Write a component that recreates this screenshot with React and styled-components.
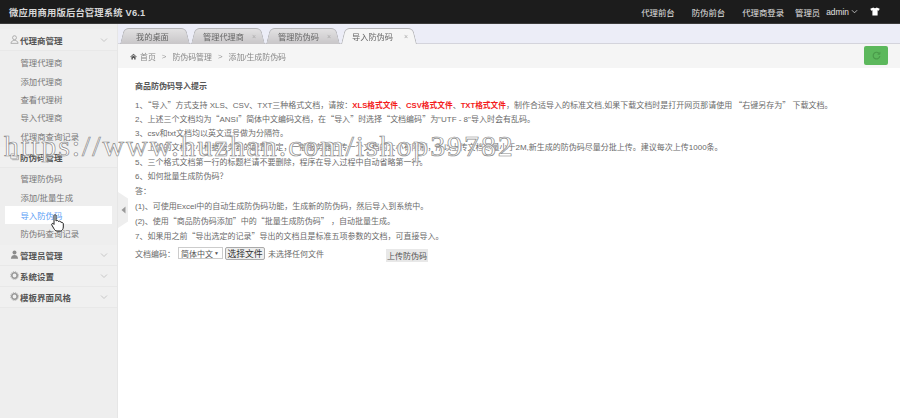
import React from "react";
import styled, { createGlobalStyle } from "styled-components";

const Global = createGlobalStyle`
  html, body { margin: 0; padding: 0; background: #fff; }
  body { font-family: "Liberation Sans", "Noto Sans CJK SC", sans-serif; font-size: 8px; color: #666; }
  * { box-sizing: border-box; }
`;

const Page = styled.div`
  position: relative;
  width: 900px;
  height: 418px;
  overflow: hidden;
  display: flex;
  flex-direction: column;
  filter: blur(0.5px);
`;

const Header = styled.header`
  height: 24px;
  flex: none;
  background: #1c1c1c;
  border-bottom: 1px solid #3a3a3a;
  color: #ddd;
  display: flex;
  align-items: center;
  padding: 0 20px 0 9px;
`;
const Brand = styled.div`
  font-size: 9.3px;
  font-weight: 600;
  color: #d8d8d8;
  letter-spacing: 0.02em;
`;
const HeaderNav = styled.nav`
  margin-left: auto;
  display: flex;
  align-items: center;
  font-size: 8.4px;
  color: #e2e2e2;
`;
const NavLink = styled.span`
  margin-left: ${(p) => p.$gap}px;
  display: inline-flex;
  align-items: center;
  gap: 2px;
`;

const Body = styled.div`
  flex: 1;
  display: flex;
  min-height: 0;
`;

const Sidebar = styled.aside`
  width: 118px;
  flex: none;
  background: #eeeeee;
  border-right: 1px solid #e6e6e6;
  padding-top: 5px;
`;
const GroupHead = styled.div`
  height: ${(p) => p.$h || 21}px;
  display: flex;
  align-items: center;
  padding: 0 9px 0 10px;
  gap: 1px;
  font-size: 8.5px;
  font-weight: 600;
  color: #555;
  background: #f0f0f0;
  border-bottom: 1px solid #e8e8e8;
`;
const GroupLabel = styled.span`
  flex: 1;
`;
const SubList = styled.div`
  padding: ${(p) => p.$pad};
`;
const SubItem = styled.div`
  height: 18.4px;
  margin: 0 5px;
  padding-left: 15.5px;
  display: flex;
  align-items: center;
  font-size: 8.4px;
  color: ${(p) => (p.$active ? "#5b9df5" : "#777")};
  background: ${(p) => (p.$active ? "#fff" : "transparent")};
`;

const Main = styled.main`
  flex: 1;
  min-width: 0;
  display: flex;
  flex-direction: column;
  position: relative;
`;
const TabBar = styled.div`
  height: 20px;
  flex: none;
  background: #ecedf7;
  border-bottom: 1px solid #d4d4dc;
  display: flex;
  align-items: flex-end;
  padding-left: 2px;
`;
const Tab = styled.div`
  position: relative;
  isolation: isolate;
  flex: none;
  width: ${(p) => p.$w}px;
  height: 16px;
  margin-bottom: -1px;
  margin-right: 1px;
  display: flex;
  align-items: center;
  padding-left: ${(p) => p.$pl}px;
  font-size: 8.2px;
  color: #666;

  &::before,
  &::after {
    content: "";
    position: absolute;
    z-index: -1;
    top: 0;
    bottom: 0;
    width: 60%;
    background: ${(p) => (p.$active ? "#f5f5f5" : "linear-gradient(#e2e1e2, #c8c6c8)")};
    border-top: 1px solid #b5b5b8;
    transform-origin: bottom;
  }
  &::before {
    left: 0;
    border-left: 1px solid #b5b5b8;
    border-radius: 5px 0 0 0;
    transform: skewX(-14deg);
  }
  &::after {
    right: 0;
    border-right: 1px solid #b5b5b8;
    border-radius: 0 5px 0 0;
    transform: skewX(14deg);
  }
`;
const TabClose = styled.span`
  position: absolute;
  right: 9px;
  font-size: 7px;
  color: #aaa;
`;
const Crumbs = styled.div`
  height: 24px;
  flex: none;
  background: #f5f5f5;
  display: flex;
  align-items: center;
  padding-left: 12px;
  font-size: 7.9px;
  color: #888;
  position: relative;
`;
const CrumbSep = styled.span`
  margin: 0 6px;
  color: #999;
`;
const RefreshBtn = styled.div`
  position: absolute;
  right: 12px;
  top: 2px;
  width: 24px;
  height: 19px;
  border-radius: 2px;
  background: #5cb85c;
  display: flex;
  align-items: center;
  justify-content: center;
`;
const Content = styled.div`
  flex: 1;
  background: #fff;
  padding: 12px 0 0 17px;
  color: #6a6a6a;
  font-size: 8px;
`;
const Title = styled.div`
  font-weight: 700;
  color: #555;
  height: 17.5px;
  line-height: 14px;
`;
const Line = styled.div`
  height: 14.6px;
  line-height: 14.6px;
  white-space: nowrap;
`;
const Wide = styled.span`
  font-family: "Noto Sans CJK SC", sans-serif;
`;
const Red = styled.b`
  color: #f31c1c;
  font-size: 7.7px;
`;
const FormRow = styled.div`
  display: flex;
  align-items: center;
  height: 18px;
  margin-top: 1px;
`;
const SelectBox = styled.span`
  margin-left: 3px;
  width: 45px;
  height: 12px;
  border: 1px solid #ccc;
  background: #fff;
  color: #555;
  display: flex;
  align-items: center;
  justify-content: space-between;
  padding: 0 3px 0 2px;
`;
const Caret = styled.span`
  font-size: 5px;
`;
const FileBtn = styled.span`
  margin: 1px 3px 0 2px;
  width: 40px;
  height: 13px;
  background: #eee;
  border: 1px solid #aaa;
  border-radius: 2px;
  color: #333;
  font-size: 8.8px;
  display: flex;
  align-items: center;
  justify-content: center;
`;
const UploadBtn = styled.span`
  margin-left: 62px;
  margin-top: 4px;
  width: 42px;
  height: 13px;
  background: #e8e8e8;
  color: #555;
  display: flex;
  align-items: center;
  justify-content: center;
`;

const Collapse = styled.div`
  position: absolute;
  left: 0;
  top: 168px;
  width: 10px;
  height: 36px;
  background: #eeeeee;
  clip-path: polygon(0 0, 100% 18%, 100% 82%, 0 100%);
  display: flex;
  align-items: center;
  justify-content: center;
`;
const Watermark = styled.div`
  position: absolute;
  left: 4px;
  top: 129px;
  font-family: "Liberation Serif", serif;
  font-size: 30px;
  letter-spacing: 1.9px;
  color: rgba(255, 255, 255, 0.75);
  -webkit-text-stroke: 0.7px #888;
  text-shadow: 0 0 2px rgba(255, 255, 255, 0.9);
  white-space: nowrap;
  pointer-events: none;
`;
const Cursor = styled.svg`
  position: absolute;
  left: 51px;
  top: 214px;
`;
const HomeIcon = styled.svg`
  margin-right: 3px;
`;

const Chevron = () => (
  <svg width="8" height="8" viewBox="0 0 8 8" fill="none" stroke="#bbb" strokeWidth="0.8">
    <path d="M1 2.5 L4 5.5 L7 2.5" />
  </svg>
);
const UserOutline = () => (
  <svg width="9" height="9" viewBox="0 0 10 10" fill="none" stroke="#999" strokeWidth="0.8">
    <circle cx="5" cy="3" r="2.2" />
    <path d="M1 9.3 C1.4 6.8 3 6 5 6 C7 6 8.6 6.8 9 9.3 Z" />
  </svg>
);
const UserSolid = () => (
  <svg width="9" height="9" viewBox="0 0 10 10" fill="#8c8c8c">
    <circle cx="5" cy="2.8" r="2.2" />
    <path d="M1 9.6 C1.2 6.6 3 5.6 5 5.6 C7 5.6 8.8 6.6 9 9.6 Z" />
  </svg>
);
const Gear = () => (
  <svg width="9" height="9" viewBox="0 0 10 10">
    <circle cx="5" cy="5" r="3" fill="none" stroke="#999" strokeWidth="1.8" />
    <circle cx="5" cy="5" r="4.4" fill="none" stroke="#aaa" strokeWidth="1" strokeDasharray="1.2 1.1" />
  </svg>
);
const Card = () => (
  <svg width="9" height="9" viewBox="0 0 10 10" fill="none" stroke="#999" strokeWidth="0.8">
    <rect x="0.8" y="2" width="7" height="5.6" rx="0.6" />
    <path d="M8 3.8 H9.4 V8.6 H2.5" />
  </svg>
);
const Home = () => (
  <HomeIcon width="7" height="7" viewBox="0 0 10 10" fill="#555">
    <path d="M5 1 L0.3 5.2 L1.2 6 L5 2.6 L8.8 6 L9.7 5.2 Z" />
    <path d="M2 6 L5 3.4 L8 6 V9.4 H5.9 V7 H4.1 V9.4 H2 Z" />
  </HomeIcon>
);
const Shirt = () => (
  <svg width="10" height="9" viewBox="0 0 10 9" fill="#fff">
    <path d="M3.3 0.5 C4 1.4 6 1.4 6.7 0.5 L9.7 1.8 L8.8 3.8 L7.6 3.3 V8.6 H2.4 V3.3 L1.2 3.8 L0.3 1.8 Z" />
  </svg>
);
const Refresh = () => (
  <svg width="9" height="9" viewBox="0 0 10 10" fill="none" stroke="#4a9a4a" strokeWidth="1.3">
    <path d="M8.2 3.2 A3.7 3.7 0 1 0 8.7 5.6" />
    <path d="M8.8 1 V3.6 H6.2" strokeWidth="1" />
  </svg>
);

const groups = [
  { icon: <UserOutline />, label: "代理商管理", h: 22, pad: "2px 0 2px", items: ["管理代理商", "添加代理商", "查看代理树", "导入代理商", "代理商查询记录"] },
  { icon: <Card />, label: "防伪码管理", h: 21, pad: "1px 0 2px", plain: true, items: ["管理防伪码", "添加/批量生成", "导入防伪码", "防伪码查询记录"], active: "导入防伪码" },
  { icon: <UserSolid />, label: "管理员管理", h: 21 },
  { icon: <Gear />, label: "系统设置", h: 21 },
  { icon: <Gear />, label: "模板界面风格", h: 21 },
];

const tabs = [
  { label: "我的桌面", w: 70, pl: 16 },
  { label: "管理代理商", w: 74, pl: 12, close: true },
  { label: "管理防伪码", w: 74, pl: 12, close: true },
  { label: "导入防伪码", w: 76, pl: 11, close: true, active: true },
];

export default function App() {
  return (
    <Page>
      <Global />
      <Header>
        <Brand>微应用商用版后台管理系统 V6.1</Brand>
        <HeaderNav>
          <NavLink>代理前台</NavLink>
          <NavLink $gap={17}>防伪前台</NavLink>
          <NavLink $gap={17}>代理商登录</NavLink>
          <NavLink $gap={11}>管理员</NavLink>
          <NavLink $gap={6}>
            admin
            <svg width="7" height="7" viewBox="0 0 8 8" fill="none" stroke="#ddd" strokeWidth="0.9">
              <path d="M1 2.5 L4 5.5 L7 2.5" />
            </svg>
          </NavLink>
          <NavLink $gap={12}><Shirt /></NavLink>
        </HeaderNav>
      </Header>
      <Body>
        <Sidebar>
          {groups.map((g) => (
            <div key={g.label}>
              <GroupHead $h={g.h}>
                {g.icon}
                <GroupLabel>{g.label}</GroupLabel>
                {!g.plain && <Chevron />}
              </GroupHead>
              {g.items && (
                <SubList $pad={g.pad}>
                  {g.items.map((it) => (
                    <SubItem key={it} $active={it === g.active}>{it}</SubItem>
                  ))}
                </SubList>
              )}
            </div>
          ))}
        </Sidebar>
        <Main>
          <TabBar>
            {tabs.map((t) => (
              <Tab key={t.label} $w={t.w} $pl={t.pl} $active={t.active}>
                {t.label}
                {t.close && <TabClose>×</TabClose>}
              </Tab>
            ))}
          </TabBar>
          <Crumbs>
            <Home />
            首页<CrumbSep>&gt;</CrumbSep>防伪码管理<CrumbSep>&gt;</CrumbSep>添加/生成防伪码
            <RefreshBtn><Refresh /></RefreshBtn>
          </Crumbs>
          <Content>
            <Title>商品防伪码导入提示</Title>
            <Line>1、<Wide>“</Wide>导入<Wide>”</Wide>方式支持 XLS、CSV、TXT三种格式文档，请按：<Red>XLS格式文件</Red>、<Red>CSV格式文件</Red>、<Red>TXT格式文件</Red>，制作合适导入的标准文档,如果下载文档时是打开网页那请使用 <Wide>“</Wide>右键另存为<Wide>”</Wide> 下载文档。</Line>
            <Line>2、上述三个文档均为<Wide>“</Wide>ANSI<Wide>”</Wide>简体中文编码文档，在<Wide>“</Wide>导入<Wide>”</Wide>时选择<Wide>“</Wide>文档编码<Wide>”</Wide>为"UTF - 8"导入时会有乱码。</Line>
            <Line>3、csv和txt文档均以英文逗号做为分隔符。</Line>
            <Line>4、上传的文档大小根据服务器的配置而定，一般服务器上传一个文档的大小有限制，所以上传文档尽量小于2M,新生成的防伪码尽量分批上传。建议每次上传1000条。</Line>
            <Line>5、三个格式文档第一行的标题栏请不要删除，程序在导入过程中自动省略第一行。</Line>
            <Line>6、如何批量生成防伪码？</Line>
            <Line>答：</Line>
            <Line>(1)、可使用Excel中的自动生成防伪码功能，生成新的防伪码，然后导入到系统中。</Line>
            <Line>(2)、使用<Wide>“</Wide>商品防伪码添加<Wide>”</Wide>中的<Wide>“</Wide>批量生成防伪码<Wide>”</Wide> ，自动批量生成。</Line>
            <Line>7、如果用之前<Wide>“</Wide>导出选定的记录<Wide>”</Wide>导出的文档且是标准五项参数的文档，可直接导入。</Line>
            <FormRow>
              文档编码：
              <SelectBox>简体中文<Caret>▼</Caret></SelectBox>
              <FileBtn>选择文件</FileBtn>
              未选择任何文件
              <UploadBtn>上传防伪码</UploadBtn>
            </FormRow>
          </Content>
          <Collapse>
            <svg width="5" height="8" viewBox="0 0 5 8" fill="#999"><path d="M4.5 0.5 V7.5 L0.5 4 Z" /></svg>
          </Collapse>
        </Main>
      </Body>
      <Watermark>https://www.huzhan.com/ishop39782</Watermark>
      <Cursor width="13" height="18" viewBox="0 0 13 18">
        <path d="M3 1.5 C3 0.5 5 0.5 5 1.5 V7 C6 6 7.5 6.5 7.5 7.5 C8.5 6.8 10 7.2 10 8.5 C11 8 12.3 8.6 12.3 10 V13 C12.3 15 11 17 9.5 17 H6 C4.5 17 3.8 16 3 14.8 L0.8 11 C0.2 9.8 1.6 8.8 2.6 9.8 L3 10.4 Z" fill="#fff" stroke="#222" strokeWidth="1" />
      </Cursor>
    </Page>
  );
}
